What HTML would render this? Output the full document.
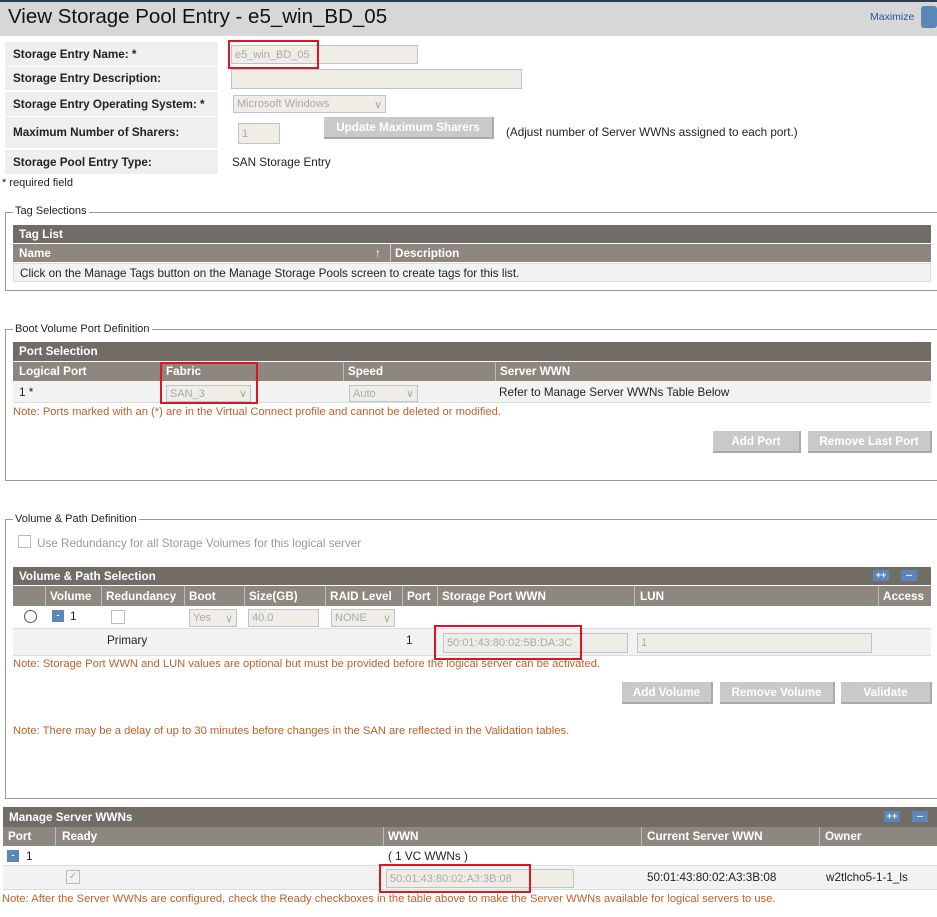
<!DOCTYPE html>
<html><head><meta charset="utf-8"><style>
*{margin:0;padding:0;box-sizing:border-box}
body{width:937px;height:917px;background:#fff;font-family:"Liberation Sans",sans-serif;font-size:11.7px;color:#222;position:relative;overflow:hidden}
.a{position:absolute;white-space:nowrap}
.lab{position:absolute;left:5px;width:213px;background:#efefef;font-weight:bold;padding-left:8px;display:flex;align-items:center}
.inp{position:absolute;background:#efede6;border:1px solid #b9c4cc;color:#a9a9a9;padding-left:3px;display:flex;align-items:center;font-size:11px}
.hdr{position:absolute;background:#716c65;color:#fff;font-weight:bold;padding-left:6px;display:flex;align-items:center}
.col{position:absolute;background:#8d877f;color:#fff;font-weight:bold;display:flex;align-items:center}
.fs{position:absolute;border:1px solid #999}
.leg{position:absolute;background:#fff;padding:0 2px;font-size:11px}
.btn{position:absolute;background:#c9c9c9;color:#fff;font-weight:bold;display:flex;align-items:center;justify-content:center;border-right:2px solid #aaa;border-bottom:2px solid #aaa}
.note{position:absolute;color:#c0602a;font-size:11.2px;white-space:nowrap}
.row{position:absolute;background:#f2f2f2;border-bottom:1px solid #ddd}
.pm{position:absolute;background:#5b86b8;color:#fff;font-size:9px;font-weight:bold;width:16px;height:11px;text-align:center;line-height:11px}
.red{position:absolute;border:2px solid #e0141e}
</style></head><body>
<div class="a" style="left:0;top:0;width:937px;height:36px;background:#d7d7d7;border-top:2px solid #2c3e50"></div>
<div class="a" style="left:8px;top:5px;font-size:20.5px;color:#111">View Storage Pool Entry - e5_win_BD_05</div>
<div class="a" style="left:870px;top:11px;font-size:10.5px;color:#2456a0">Maximize</div>
<div class="a" style="left:921px;top:6px;width:16px;height:22px;background:#5b86b8;border-radius:3px"></div>

<div class="lab" style="top:42px;height:24px">Storage Entry Name: *</div>
<div class="lab" style="top:67px;height:23px">Storage Entry Description:</div>
<div class="lab" style="top:92px;height:24px">Storage Entry Operating System: *</div>
<div class="lab" style="top:117px;height:31px">Maximum Number of Sharers:</div>
<div class="lab" style="top:150px;height:24px">Storage Pool Entry Type:</div>
<div class="inp" style="left:231px;top:45px;width:187px;height:19px">e5_win_BD_05</div>
<div class="red" style="left:228px;top:40px;width:91px;height:29px"></div>
<div class="inp" style="left:231px;top:69px;width:291px;height:20px"></div>
<div class="inp" style="left:233px;top:95px;width:153px;height:18px">Microsoft Windows<span style="position:absolute;right:3px">∨</span></div>
<div class="inp" style="left:238px;top:123px;width:42px;height:21px">1</div>
<div class="btn" style="left:324px;top:117px;width:170px;height:22px">Update Maximum Sharers</div>
<div class="a" style="left:506px;top:126px">(Adjust number of Server WWNs assigned to each port.)</div>
<div class="a" style="left:232px;top:156px">SAN Storage Entry</div>
<div class="a" style="left:2px;top:177px;font-size:11px">* required field</div>

<div class="fs" style="left:5px;top:212px;width:940px;height:79px"></div>
<div class="leg" style="left:13px;top:205px">Tag Selections</div>
<div class="hdr" style="left:13px;top:225px;width:918px;height:18px">Tag List</div>
<div class="col" style="left:13px;top:244px;width:918px;height:18px;padding-left:6px">Name<span class="a" style="left:362px;top:3px">↑</span><span class="a" style="left:377px;top:0;width:1px;height:18px;background:#ccc"></span><span class="a" style="left:382px;top:3px">Description</span></div>
<div class="row" style="left:13px;top:263px;width:918px;height:19px;padding:3px 6px;border:1px solid #ddd">Click on the Manage Tags button on the Manage Storage Pools screen to create tags for this list.</div>

<div class="fs" style="left:5px;top:329px;width:940px;height:152px"></div>
<div class="leg" style="left:13px;top:323px">Boot Volume Port Definition</div>
<div class="hdr" style="left:13px;top:342px;width:918px;height:19px">Port Selection</div>
<div class="col" style="left:13px;top:362px;width:918px;height:19px">
<span class="a" style="left:6px">Logical Port</span><span class="a" style="left:153px">Fabric</span><span class="a" style="left:335px">Speed</span><span class="a" style="left:487px">Server WWN</span>
<span class="a" style="left:147px;top:0;width:1px;height:19px;background:#bbb"></span><span class="a" style="left:330px;top:0;width:1px;height:19px;background:#bbb"></span><span class="a" style="left:482px;top:0;width:1px;height:19px;background:#bbb"></span></div>
<div class="row" style="left:13px;top:381px;width:918px;height:22px"></div>
<div class="a" style="left:19px;top:386px">1 *</div>
<div class="inp" style="left:166px;top:385px;width:85px;height:17px">SAN_3<span style="position:absolute;right:3px">∨</span></div>
<div class="red" style="left:160px;top:362px;width:98px;height:42px"></div>
<div class="inp" style="left:349px;top:385px;width:69px;height:17px">Auto<span style="position:absolute;right:3px">∨</span></div>
<div class="a" style="left:499px;top:386px">Refer to Manage Server WWNs Table Below</div>
<div class="note" style="left:13px;top:406px">Note: Ports marked with an (*) are in the Virtual Connect profile and cannot be deleted or modified.</div>
<div class="btn" style="left:713px;top:431px;width:88px;height:22px">Add Port</div>
<div class="btn" style="left:808px;top:431px;width:124px;height:22px">Remove Last Port</div>

<div class="fs" style="left:5px;top:519px;width:940px;height:280px"></div>
<div class="leg" style="left:13px;top:513px">Volume &amp; Path Definition</div>
<div class="a" style="left:18px;top:535px;width:13px;height:13px;border:1px solid #bbb"></div>
<div class="a" style="left:37px;top:537px;color:#999">Use Redundancy for all Storage Volumes for this logical server</div>
<div class="hdr" style="left:13px;top:567px;width:918px;height:18px">Volume &amp; Path Selection</div>
<div class="pm" style="left:873px;top:570px">++</div><div class="pm" style="left:901px;top:570px">--</div>
<div class="col" style="left:13px;top:586px;width:918px;height:20px">
<span class="a" style="left:37px">Volume</span><span class="a" style="left:93px">Redundancy</span><span class="a" style="left:176px">Boot</span><span class="a" style="left:236px">Size(GB)</span><span class="a" style="left:317px">RAID Level</span><span class="a" style="left:394px">Port</span><span class="a" style="left:429px">Storage Port WWN</span><span class="a" style="left:627px">LUN</span><span class="a" style="left:870px">Access</span>
<span class="a" style="left:32px;top:0;width:1px;height:20px;background:#bbb"></span><span class="a" style="left:88px;top:0;width:1px;height:20px;background:#bbb"></span><span class="a" style="left:171px;top:0;width:1px;height:20px;background:#bbb"></span><span class="a" style="left:231px;top:0;width:1px;height:20px;background:#bbb"></span><span class="a" style="left:312px;top:0;width:1px;height:20px;background:#bbb"></span><span class="a" style="left:389px;top:0;width:1px;height:20px;background:#bbb"></span><span class="a" style="left:424px;top:0;width:1px;height:20px;background:#bbb"></span><span class="a" style="left:621px;top:0;width:1px;height:20px;background:#bbb"></span><span class="a" style="left:865px;top:0;width:1px;height:20px;background:#bbb"></span></div>
<div class="a" style="left:13px;top:606px;width:918px;height:23px;border-bottom:1px solid #ddd"></div>
<div class="a" style="left:24px;top:610px;width:13px;height:13px;border:1px solid #555;border-radius:50%"></div>
<div class="pm" style="left:52px;top:610px;width:12px;height:12px;line-height:11px">-</div><div class="a" style="left:70px;top:610px">1</div>
<div class="a" style="left:111px;top:610px;width:14px;height:14px;border:1px solid #bbb"></div>
<div class="inp" style="left:189px;top:609px;width:48px;height:18px">Yes<span style="position:absolute;right:3px">∨</span></div>
<div class="inp" style="left:248px;top:609px;width:71px;height:18px">40.0</div>
<div class="inp" style="left:331px;top:609px;width:64px;height:18px">NONE<span style="position:absolute;right:3px">∨</span></div>
<div class="row" style="left:13px;top:629px;width:918px;height:27px"></div>
<div class="a" style="left:107px;top:634px">Primary</div>
<div class="a" style="left:406px;top:634px">1</div>
<div class="inp" style="left:443px;top:633px;width:185px;height:20px">50:01:43:80:02:5B:DA:3C</div>
<div class="red" style="left:434px;top:625px;width:148px;height:35px"></div>
<div class="inp" style="left:637px;top:633px;width:235px;height:20px">1</div>
<div class="note" style="left:13px;top:658px">Note: Storage Port WWN and LUN values are optional but must be provided before the logical server can be activated.</div>
<div class="btn" style="left:622px;top:682px;width:91px;height:22px">Add Volume</div>
<div class="btn" style="left:720px;top:682px;width:115px;height:22px">Remove Volume</div>
<div class="btn" style="left:841px;top:682px;width:91px;height:22px">Validate</div>
<div class="note" style="left:13px;top:725px">Note: There may be a delay of up to 30 minutes before changes in the SAN are reflected in the Validation tables.</div>

<div class="hdr" style="left:3px;top:807px;width:934px;height:20px">Manage Server WWNs</div>
<div class="pm" style="left:884px;top:811px">++</div><div class="pm" style="left:912px;top:811px">--</div>
<div class="col" style="left:3px;top:827px;width:934px;height:19px">
<span class="a" style="left:5px">Port</span><span class="a" style="left:59px">Ready</span><span class="a" style="left:385px">WWN</span><span class="a" style="left:644px">Current Server WWN</span><span class="a" style="left:822px">Owner</span>
<span class="a" style="left:52px;top:0;width:1px;height:19px;background:#bbb"></span><span class="a" style="left:380px;top:0;width:1px;height:19px;background:#bbb"></span><span class="a" style="left:638px;top:0;width:1px;height:19px;background:#bbb"></span><span class="a" style="left:816px;top:0;width:1px;height:19px;background:#bbb"></span></div>
<div class="a" style="left:3px;top:846px;width:934px;height:20px;border-bottom:1px solid #ddd"></div>
<div class="pm" style="left:7px;top:850px;width:12px;height:12px;line-height:11px">-</div><div class="a" style="left:26px;top:850px">1</div>
<div class="a" style="left:388px;top:850px">( 1 VC WWNs )</div>
<div class="row" style="left:3px;top:866px;width:934px;height:24px"></div>
<div class="a" style="left:66px;top:870px;width:14px;height:14px;border:1px solid #bbb;color:#aaa;font-size:10px;text-align:center;line-height:12px">✓</div>
<div class="inp" style="left:386px;top:869px;width:188px;height:19px">50:01:43:80:02:A3:3B:08</div>
<div class="red" style="left:379px;top:864px;width:152px;height:29px"></div>
<div class="a" style="left:647px;top:871px">50:01:43:80:02:A3:3B:08</div>
<div class="a" style="left:826px;top:871px">w2tlcho5-1-1_ls</div>
<div class="note" style="left:2px;top:893px">Note: After the Server WWNs are configured, check the Ready checkboxes in the table above to make the Server WWNs available for logical servers to use.</div>
</body></html>
